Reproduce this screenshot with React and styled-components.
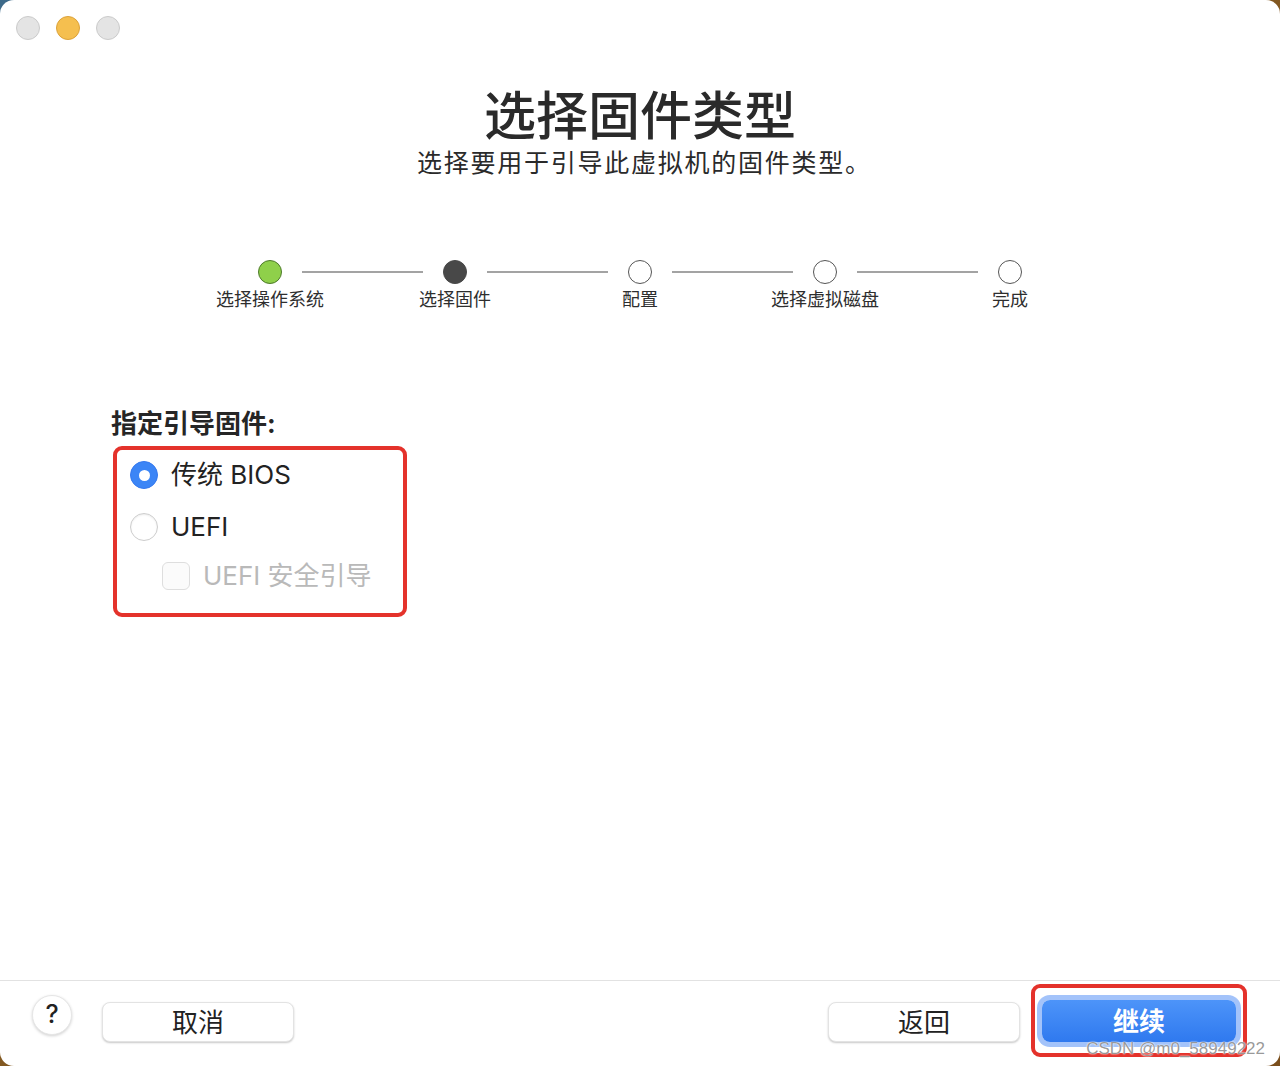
import React from "react";
import styled, { createGlobalStyle } from "styled-components";

const Global = createGlobalStyle`
  html, body { margin: 0; padding: 0; }
  body {
    width: 1280px;
    height: 1066px;
    overflow: hidden;
    background: linear-gradient(135deg, #3d6a8a 0%, #3d6a8a 3%, #8a6226 3%, #7a4e1c 100%);
    font-family: "Inter", "Noto Sans CJK SC", sans-serif;
    color: #262626;
  }
`;

const Window = styled.div`
  width: 1280px;
  height: 1066px;
  background: #ffffff;
  border-radius: 14px;
  display: flex;
  flex-direction: column;
  overflow: hidden;
  position: relative;
`;

const TitleBar = styled.div`
  display: flex;
  gap: 16px;
  padding: 16px 0 0 16px;
  height: 40px;
  box-sizing: border-box;
`;

const Light = styled.span`
  width: 24px;
  height: 24px;
  border-radius: 50%;
  box-sizing: border-box;
  background: ${(p) => (p.$yellow ? "#f5bf4f" : "#e4e4e4")};
  border: 1px solid ${(p) => (p.$yellow ? "#dca23a" : "#cbcbcb")};
`;

const Main = styled.div`
  flex: 1;
  display: flex;
  flex-direction: column;
`;

const Title = styled.h1`
  margin: 46px 0 0;
  text-align: center;
  font-size: 52px;
  line-height: 62px;
  font-weight: 500;
  color: #2a2a2a;
  letter-spacing: 0;
`;

const Subtitle = styled.p`
  margin: 0;
  padding-left: 9px;
  text-align: center;
  font-size: 25px;
  line-height: 31px;
  letter-spacing: 1.75px;
  color: #2a2a2a;
`;

const Stepper = styled.div`
  display: grid;
  grid-template-columns: repeat(5, 185px);
  justify-content: center;
  margin-top: 81px;
`;

const Step = styled.div`
  position: relative;
  display: flex;
  flex-direction: column;
  align-items: center;
  gap: 5px;
  &:not(:last-child)::after {
    content: "";
    position: absolute;
    top: 11px;
    left: calc(50% + 32px);
    width: 121px;
    height: 2px;
    background: #a3a3a3;
  }
`;

const Dot = styled.span`
  width: 24px;
  height: 24px;
  border-radius: 50%;
  box-sizing: border-box;
  background: ${(p) =>
    p.$state === "done" ? "#8fd04a" : p.$state === "current" ? "#484848" : "#ffffff"};
  border: 1px solid
    ${(p) =>
      p.$state === "done" ? "#4e7a2c" : p.$state === "current" ? "#484848" : "#555555"};
`;

const StepLabel = styled.span`
  font-size: 18px;
  line-height: 22px;
  color: #2e2e2e;
  white-space: nowrap;
`;

const Section = styled.div`
  margin: 97px 0 0 111px;
  display: flex;
  flex-direction: column;
  align-items: flex-start;
`;

const Heading = styled.div`
  font-size: 26px;
  line-height: 31px;
  font-weight: 700;
  color: #262626;
`;

const Highlight = styled.div`
  margin: 7px 0 0 2px;
  width: 294px;
  height: 171px;
  box-sizing: border-box;
  border: 4px solid #e4322b;
  border-radius: 9px;
  padding: 11px 0 0 13px;
  display: flex;
  flex-direction: column;
`;

const OptionRow = styled.label`
  display: flex;
  align-items: center;
  gap: 13px;
  height: 28px;
  margin-bottom: ${(p) => p.$gap}px;
  padding-left: ${(p) => (p.$indent ? 32 : 0)}px;
`;

const Radio = styled.span`
  width: 28px;
  height: 28px;
  border-radius: 50%;
  box-sizing: border-box;
  display: flex;
  align-items: center;
  justify-content: center;
  background: ${(p) => (p.$checked ? "#3b85f6" : "#ffffff")};
  border: 1px solid ${(p) => (p.$checked ? "#3478ee" : "#cdcdcd")};
  box-shadow: ${(p) => (p.$checked ? "none" : "inset 0 1px 2px rgba(0,0,0,0.08)")};
  &::after {
    content: "";
    display: ${(p) => (p.$checked ? "block" : "none")};
    width: 11px;
    height: 11px;
    border-radius: 50%;
    background: #ffffff;
  }
`;

const Check = styled.span`
  width: 28px;
  height: 28px;
  border-radius: 6px;
  box-sizing: border-box;
  background: #fbfbfb;
  border: 1px solid #dedede;
`;

const OptionText = styled.span`
  font-size: 26px;
  line-height: 30px;
  color: ${(p) => (p.$disabled ? "#b9b9b9" : "#222222")};
`;

const Footer = styled.div`
  height: 86px;
  border-top: 1px solid #e2e2e2;
  box-sizing: border-box;
  display: flex;
  align-items: center;
  padding: 0 33px 4px 32px;
`;

const HelpButton = styled.button`
  width: 40px;
  height: 40px;
  border-radius: 50%;
  border: 1px solid #e6e6e6;
  background: #ffffff;
  box-shadow: 0 1px 3px rgba(0, 0, 0, 0.18);
  font-family: "Inter", sans-serif;
  font-size: 25px;
  font-weight: 500;
  color: #222;
  padding: 0 0 2px;
  margin-top: -14px;
  display: flex;
  align-items: center;
  justify-content: center;
`;

const Button = styled.button`
  width: 192px;
  height: 40px;
  border-radius: 8px;
  border: 1px solid #e3e3e3;
  background: #ffffff;
  box-shadow: 0 1px 2px rgba(0, 0, 0, 0.22);
  font-family: "Noto Sans CJK SC", sans-serif;
  font-size: 26px;
  line-height: 34px;
  color: #222222;
  padding: 0 0 2px;
  margin-left: ${(p) => p.$ml || 0}px;
`;

const Spacer = styled.div`
  flex: 1;
`;

const ContinueFrame = styled.div`
  margin-left: 11px;
  box-sizing: border-box;
  border: 4px solid #e4322b;
  border-radius: 9px;
  width: 216px;
  height: 73px;
  margin-top: -2px;
  display: flex;
  align-items: center;
  justify-content: center;
`;

const PrimaryButton = styled.button`
  width: 194px;
  height: 42px;
  border-radius: 8px;
  border: none;
  background: linear-gradient(#4d94f9, #2f79ef);
  box-shadow: 0 0 0 5px rgba(88, 146, 246, 0.55);
  font-family: "Noto Sans CJK SC", sans-serif;
  font-size: 26px;
  line-height: 36px;
  font-weight: 600;
  color: #ffffff;
  padding: 0 0 2px;
`;

const Watermark = styled.span`
  position: absolute;
  right: 15px;
  bottom: 7px;
  font-family: "Liberation Sans", sans-serif;
  font-size: 17px;
  color: rgba(120, 120, 120, 0.75);
  text-shadow: 0 0 1px #fff, 0 0 2px #fff;
  letter-spacing: 0;
`;

const steps = [
  { label: "选择操作系统", state: "done" },
  { label: "选择固件", state: "current" },
  { label: "配置", state: "todo" },
  { label: "选择虚拟磁盘", state: "todo" },
  { label: "完成", state: "todo" },
];

export default function App() {
  return (
    <>
      <Global />
      <Window>
        <TitleBar>
          <Light />
          <Light $yellow />
          <Light />
        </TitleBar>
        <Main>
          <Title>选择固件类型</Title>
          <Subtitle>选择要用于引导此虚拟机的固件类型。</Subtitle>
          <Stepper>
            {steps.map((s) => (
              <Step key={s.label}>
                <Dot $state={s.state} />
                <StepLabel>{s.label}</StepLabel>
              </Step>
            ))}
          </Stepper>
          <Section>
            <Heading>指定引导固件:</Heading>
            <Highlight>
              <OptionRow $gap={24}>
                <Radio $checked />
                <OptionText>传统 BIOS</OptionText>
              </OptionRow>
              <OptionRow $gap={21}>
                <Radio />
                <OptionText>UEFI</OptionText>
              </OptionRow>
              <OptionRow $indent $gap={0}>
                <Check />
                <OptionText $disabled>UEFI 安全引导</OptionText>
              </OptionRow>
            </Highlight>
          </Section>
        </Main>
        <Footer>
          <HelpButton>?</HelpButton>
          <Button $ml={30}>取消</Button>
          <Spacer />
          <Button>返回</Button>
          <ContinueFrame>
            <PrimaryButton>继续</PrimaryButton>
          </ContinueFrame>
        </Footer>
        <Watermark>CSDN @m0_58949222</Watermark>
      </Window>
    </>
  );
}
